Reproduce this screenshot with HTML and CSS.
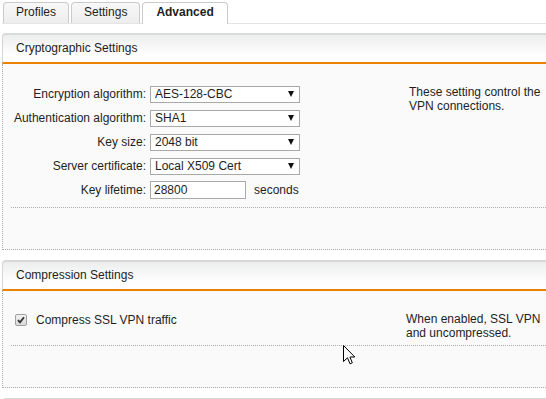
FILE: index.html
```html
<!DOCTYPE html>
<html lang="en">
<head>
    <meta charset="UTF-8">
    <title>SSL VPN - Advanced</title>
    <link rel="stylesheet" href="styles.css">
</head>
<body>
    <div class="page">
        <div class="tabs">
            <a class="tab">Profiles</a>
            <a class="tab">Settings</a>
            <a class="tab active">Advanced</a>
        </div>

        <div class="section">
            <div class="section-header">Cryptographic Settings</div>
            <div class="section-body">
                <div class="content">
                    <div class="form">
                        <label class="field-label">Encryption algorithm:</label>
                        <div class="select"><span>AES-128-CBC</span><span class="arrow"></span></div>

                        <label class="field-label">Authentication algorithm:</label>
                        <div class="select"><span>SHA1</span><span class="arrow"></span></div>

                        <label class="field-label">Key size:</label>
                        <div class="select"><span>2048 bit</span><span class="arrow"></span></div>

                        <label class="field-label">Server certificate:</label>
                        <div class="select"><span>Local X509 Cert</span><span class="arrow"></span></div>

                        <label class="field-label">Key lifetime:</label>
                        <div class="input-group">
                            <div class="text-input">28800</div>
                            <span>seconds</span>
                        </div>
                    </div>
                    <p class="description">These setting control the<br>VPN connections.</p>
                </div>
            </div>
        </div>

        <div class="section">
            <div class="section-header">Compression Settings</div>
            <div class="section-body">
                <div class="content narrow">
                    <div class="check-row">
                        <span class="checkbox">
                            <svg width="8" height="8" viewBox="0 0 8 8"><path d="M1 4.2 L3 6.4 L7 1.2" fill="none" stroke="#333" stroke-width="1.8"/></svg>
                        </span>
                        <span>Compress SSL VPN traffic</span>
                    </div>
                    <p class="description">When enabled, SSL VPN<br>and uncompressed.</p>
                </div>
            </div>
        </div>

        <div class="section">
            <div class="section-header"></div>
        </div>
    </div>

    <svg class="cursor" width="13" height="20" viewBox="0 0 13 20">
        <path d="M0.5 0.5 L0.5 16.5 L4.5 12.8 L7 18.8 L9.3 17.8 L6.9 12 L11.8 12 Z" fill="#fff" stroke="#000" stroke-width="1" stroke-linejoin="miter"/>
    </svg>
</body>
</html>
```

FILE: styles.css
```css
* {
    margin: 0;
    padding: 0;
    box-sizing: border-box;
}

html, body {
    overflow: hidden;
}

body {
    font-family: 'Liberation Sans', Arial, sans-serif;
    font-size: 12px;
    color: #1e1e1e;
    background: #fff;
}

.page {
    width: 760px;
    padding: 2px 0 0 2px;
}

/* tabs */
.tabs {
    display: flex;
    gap: 2px;
    padding-left: 1px;
    border-bottom: 1px solid #e4e4e4;
}

.tab {
    height: 21px;
    line-height: 19px;
    padding: 0 12px;
    border: 1px solid #cacaca;
    border-bottom: none;
    border-radius: 4px 4px 0 0;
    background: linear-gradient(#f8f8f8, #eeeeee);
    color: #1e1e1e;
    text-decoration: none;
    cursor: pointer;
}

.tab.active {
    background: #fff;
    font-weight: 700;
    height: 22px;
    padding: 0 13px;
    margin-bottom: -1px;
}

/* sections */
.section {
    margin-top: 9px;
}

.section + .section {
    margin-top: 10px;
}

.section-header {
    height: 31px;
    line-height: 27px;
    padding-left: 13px;
    border-top: 2px solid #d9d9d9;
    border-left: 1px solid #d6d6d6;
    border-bottom: 2px solid #e98200;
    border-top-left-radius: 4px;
    background: linear-gradient(#eceeed 0%, #f7f8f7 45%, #fefefe 75%);
}

.section-body {
    background: #fafafa;
    border-left: 1px dotted #aaa;
    border-bottom: 1px dotted #aaa;
    padding: 17px 0 41px 8px;
}

.content {
    display: flex;
    align-items: flex-start;
    padding-bottom: 5px;
    border-bottom: 1px dotted #aaa;
}

.form {
    width: 398px;
    margin-top: 1px;
    display: grid;
    grid-template-columns: 135px auto;
    grid-auto-rows: 24px;
    column-gap: 4px;
    align-items: center;
    align-content: start;
}

.content.narrow .check-row {
    width: 395px;
}

.field-label {
    text-align: right;
}

.select {
    width: 150px;
    height: 17px;
    border: 1px solid #a9a9a9;
    background: #fff;
    display: flex;
    align-items: center;
    justify-content: space-between;
    padding: 0 5px 0 4px;
}

.arrow {
    width: 0;
    height: 0;
    border-left: 3.5px solid transparent;
    border-right: 3.5px solid transparent;
    border-top: 6px solid #111;
}

.input-group {
    display: flex;
    align-items: center;
    gap: 8px;
}

.text-input {
    width: 96px;
    height: 18px;
    line-height: 16px;
    border: 1px solid #a9a9a9;
    background: #fff;
    padding-left: 3px;
}

.description {
    margin-top: 4px;
    line-height: 14px;
    white-space: nowrap;
}

.check-row {
    height: 24px;
    display: flex;
    align-items: center;
    gap: 9px;
    padding-left: 4px;
}

.checkbox {
    width: 12px;
    height: 12px;
    border: 1px solid #a0a0a0;
    border-radius: 2px;
    background: linear-gradient(#f2f2f2, #d9d9d9);
    display: flex;
    align-items: center;
    justify-content: center;
}

.cursor {
    position: absolute;
    left: 343px;
    top: 345px;
}
```
